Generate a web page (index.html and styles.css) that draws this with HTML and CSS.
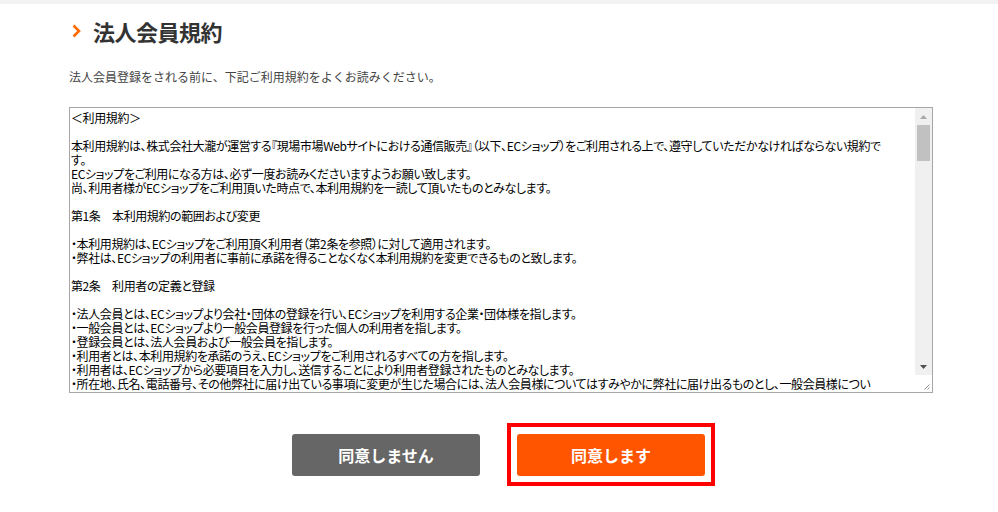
FILE: index.html
```html
<!DOCTYPE html>
<html lang="ja">
<head>
<meta charset="utf-8">
<title>法人会員規約</title>
<link rel="stylesheet" href="styles.css">
</head>
<body>
<div class="topbar"></div>

<main class="page">
  <h2 class="page-title">
    <svg class="chevron" width="9" height="14" viewBox="0 0 9 14"><path d="M1.5 1.5 L7 7 L1.5 12.5" fill="none" stroke="#ff6a00" stroke-width="2.6"/></svg>
    法人会員規約
  </h2>

  <p class="lead">法人会員登録をされる前に、下記ご利用規約をよくお読みください。</p>

  <div class="terms-box">
    <textarea class="terms" readonly>＜利用規約＞

本利用規約は、株式会社大瀧が運営する『現場市場Webサイトにおける通信販売』（以下、ECショップ）をご利用される上で、遵守していただかなければならない規約で
す。
ECショップをご利用になる方は、必ず一度お読みくださいますようお願い致します。
尚、利用者様がECショップをご利用頂いた時点で、本利用規約を一読して頂いたものとみなします。

第1条　本利用規約の範囲および変更

・本利用規約は、ECショップをご利用頂く利用者（第2条を参照）に対して適用されます。
・弊社は、ECショップの利用者に事前に承諾を得ることなくなく本利用規約を変更できるものと致します。

第2条　利用者の定義と登録

・法人会員とは、ECショップより会社・団体の登録を行い、ECショップを利用する企業・団体様を指します。
・一般会員とは、ECショップより一般会員登録を行った個人の利用者を指します。
・登録会員とは、法人会員および一般会員を指します。
・利用者とは、本利用規約を承諾のうえ、ECショップをご利用されるすべての方を指します。
・利用者は、ECショップから必要項目を入力し、送信することにより利用者登録されたものとみなします。
・所在地、氏名、電話番号、その他弊社に届け出ている事項に変更が生じた場合には、法人会員様についてはすみやかに弊社に届け出るものとし、一般会員様につい
ては登録情報の変更手続きを行うものとします。

第3条　登録情報の管理

・登録会員は、ログインID及びパスワードを自己の責任において管理するものとします。
・ログインID及びパスワードの管理不十分、使用上の過誤、第三者の使用等による損害の責任は登録会員が負うものとし、弊社は一切の責任を負いません。
・登録会員は、ログインID及びパスワードが第三者に使用されていることが判明した場合、直ちに弊社にその旨を連絡するものとします。

第4条　登録の取消し

・弊社は、登録会員が以下の各号のいずれかに該当する場合、事前に通知することなく登録を取り消すことができるものとします。
（1）登録事項に虚偽の記載があった場合
（2）代金の支払いを遅滞し、または支払いを拒否した場合
（3）本利用規約に違反した場合
（4）その他、弊社が登録会員として不適当と判断した場合

第5条　商品の注文

・利用者は、ECショップにおいて弊社所定の手続きに従い商品の注文を行うものとします。
・利用者が注文を送信した後、弊社から送信する注文確認メールが利用者に到達した時点で売買契約が成立するものとします。
・在庫切れ等の理由により、ご注文をお受けできない場合があります。その場合は弊社より別途ご連絡いたします。

第6条　商品の価格および支払方法

・商品の価格は、ECショップ上に表示された価格とします。
・送料、代引手数料、振込手数料等は、別途利用者のご負担となります。
・お支払い方法は、クレジットカード決済、銀行振込、代金引換、請求書払い（法人会員様のみ）とします。
・請求書払いをご利用の法人会員様は、弊社所定の期日までにお支払いいただくものとします。

第7条　商品の配送

・商品の配送は、利用者が指定した配送先へ弊社が指定する運送業者にて行います。
・配送先の住所不備、長期不在等により商品をお届けできない場合、再配送に係る費用は利用者のご負担となります。
・天候、交通事情、その他やむを得ない事情により、お届けが遅れる場合があります。

第8条　返品・交換

・商品到着後8日以内に限り、初期不良および誤配送の場合に返品・交換を承ります。
・お客様のご都合による返品・交換は原則としてお受けできません。
・使用済みの商品、加工・切断された商品、特注品については返品・交換をお受けできません。
・返品・交換の際は、必ず事前に弊社までご連絡ください。

第9条　禁止事項

・利用者は、ECショップの利用にあたり以下の行為を行ってはならないものとします。
（1）虚偽の情報を登録する行為
（2）他の利用者または第三者になりすます行為
（3）弊社または第三者の著作権、商標権その他の知的財産権を侵害する行為
（4）弊社または第三者の財産、プライバシーを侵害する行為
（5）ECショップの運営を妨害する行為
（6）転売を目的として商品を購入する行為
（7）法令または公序良俗に反する行為
（8）その他、弊社が不適切と判断する行為

第10条　個人情報の取扱い

・弊社は、利用者の個人情報を別途定めるプライバシーポリシーに従い適切に取り扱うものとします。
・弊社は、利用者の個人情報を商品の発送、代金の請求、アフターサービス、弊社からのご案内等の目的以外には使用いたしません。
・弊社は、法令に基づく場合を除き、利用者の同意なく個人情報を第三者に開示・提供いたしません。

第11条　サービスの中断・停止

・弊社は、以下の場合には利用者に事前に通知することなくECショップの全部または一部を中断・停止することができるものとします。
（1）システムの保守点検または更新を行う場合
（2）火災、停電、天災等の不可抗力によりサービスの提供が困難となった場合
（3）その他、弊社が中断・停止を必要と判断した場合

第12条　免責事項

・弊社は、ECショップの中断・停止により利用者に生じた損害について一切の責任を負わないものとします。
・ECショップに掲載する商品画像は、実際の商品と色味等が異なる場合があります。
・弊社は、利用者間または利用者と第三者との間で生じた紛争について一切の責任を負わないものとします。

第13条　著作権

・ECショップに掲載されている文章、画像、ロゴ等の著作権は弊社または正当な権利者に帰属します。
・利用者は、弊社の事前の承諾なくこれらを複製、転載、改変等することはできません。

第14条　準拠法および管轄裁判所

・本利用規約の解釈および適用は日本法に準拠するものとします。
・ECショップの利用に関して紛争が生じた場合、弊社本店所在地を管轄する地方裁判所を第一審の専属的合意管轄裁判所とします。

附則
本利用規約は、2015年4月1日より施行します。</textarea>

    <div class="scrollbar" aria-hidden="true">
      <span class="sb-btn">
        <svg width="7" height="4" viewBox="0 0 7 4"><path d="M0 4h7L3.5 0z" fill="#a8a8a8"/></svg>
      </span>
      <span class="sb-track"><span class="sb-thumb"></span></span>
      <span class="sb-btn">
        <svg width="7" height="4" viewBox="0 0 7 4"><path d="M0 0h7L3.5 4z" fill="#505050"/></svg>
      </span>
      <span class="sb-corner">
        <svg width="17" height="17" viewBox="0 0 17 17"><path d="M14.5 9.5 L9.5 14.5 M14.5 12.5 L12.5 14.5" stroke="#8f8f8f" stroke-width="1"/></svg>
      </span>
    </div>
  </div>

  <div class="actions">
    <a class="btn btn-disagree" href="#">同意しません</a>
    <span class="highlight"><a class="btn btn-agree" href="#">同意します</a></span>
  </div>
</main>
</body>
</html>
```

FILE: styles.css
```css
body{
  margin: 0;
  background: #fff;
  font-family: "Noto Sans CJK JP", "Noto Sans", sans-serif;
  color: #333;
}

.topbar{
  height: 4px;
  background: #f2f2f2;
}

.page{
  padding: 16px 65px 0 69px;
}

.page-title{
  display: flex;
  align-items: center;
  gap: 12px;
  margin: 0 0 0 3px;
  font-size: 22px;
  line-height: 22px;
  font-weight: 700;
  letter-spacing: -0.5px;
  color: #333;
}

.chevron{
  flex: none;
}

.lead{
  margin: 26px 0 0;
  font-size: 12px;
  line-height: 18px;
  color: #444;
}

/* textarea + drawn scrollbar */
.terms-box{
  display: flex;
  box-sizing: border-box;
  width: 864px;
  height: 286px;
  margin-top: 21px;
  border: 1px solid #a6a6a6;
  background: #fff;
}

.terms{
  flex: 1;
  min-width: 0;
  margin: 0;
  padding: 3px 1px 1px;
  border: 0;
  font-family: "Noto Sans CJK JP", sans-serif;
  font-feature-settings: "palt";
  font-size: 12px;
  line-height: 14px;
  letter-spacing: -0.4px;
  color: #000;
  background: #fff;
  resize: none;
  outline: none;
  overflow: hidden;
}

.scrollbar{
  display: flex;
  flex-direction: column;
  width: 17px;
  flex: none;
  background: #f0f0f0;
}

.sb-btn{
  display: flex;
  justify-content: center;
  align-items: center;
  height: 17px;
}

.sb-track{
  flex: 1;
  padding: 0 2px;
}

.sb-thumb{
  display: block;
  height: 36px;
  background: #c1c1c1;
}

.sb-corner{
  display: block;
  height: 17px;
  background: #fff;
}

.sb-corner svg{
  display: block;
}

.actions{
  display: flex;
  justify-content: center;
  align-items: center;
  gap: 27px;
  margin-top: 30px;
  padding-left: 5px;
}

.btn{
  display: flex;
  justify-content: center;
  align-items: center;
  width: 188px;
  height: 42px;
  border-radius: 3px;
  font-size: 16px;
  font-weight: 700;
  color: #fff;
  text-decoration: none;
}

.btn-disagree{
  background: #666;
}

.btn-agree{
  background: #ff5500;
}

.highlight{
  display: block;
  padding: 7px 6px 6px 6px;
  border: 4px solid #ff0000;
}
```
